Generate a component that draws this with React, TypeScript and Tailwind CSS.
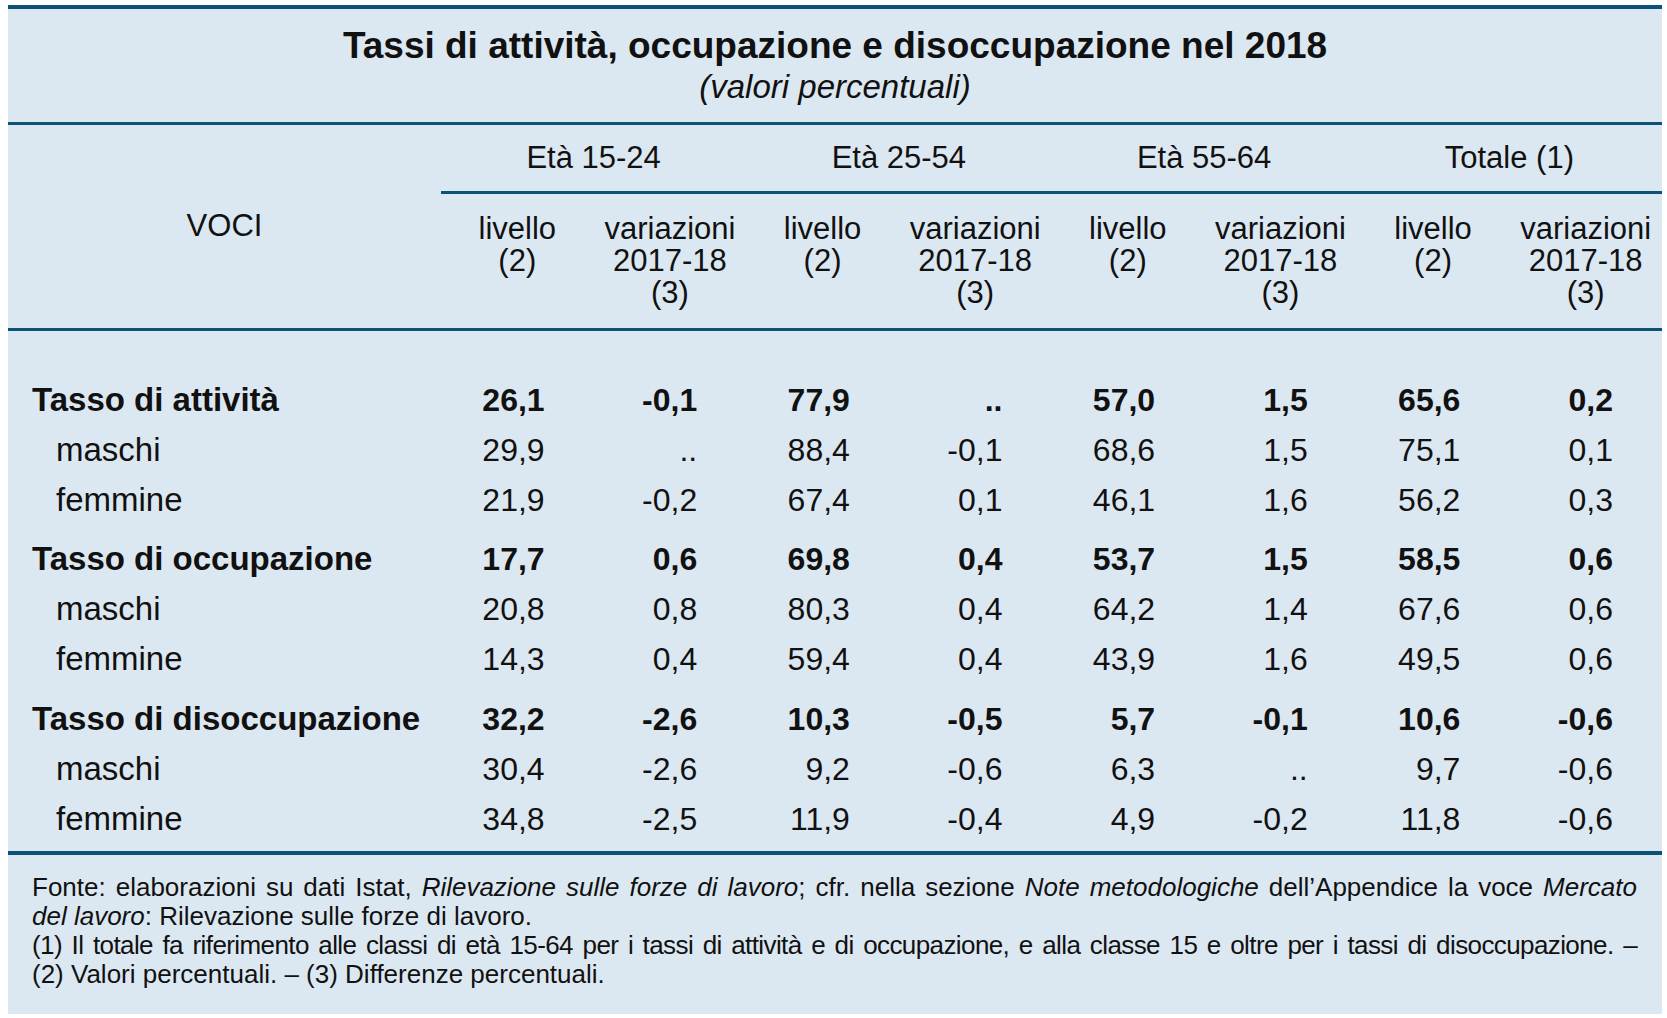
import React from "react";

const SANS = { fontFamily: '"Liberation Sans", Arial, sans-serif' };

const GROUPS = ["Età 15-24", "Età 25-54", "Età 55-64", "Totale (1)"];

type Row = { label: string; bold?: boolean; values: string[] };

const SECTIONS: Row[][] = [
  [
    { label: "Tasso di attività", bold: true, values: ["26,1", "-0,1", "77,9", "..", "57,0", "1,5", "65,6", "0,2"] },
    { label: "maschi", values: ["29,9", "..", "88,4", "-0,1", "68,6", "1,5", "75,1", "0,1"] },
    { label: "femmine", values: ["21,9", "-0,2", "67,4", "0,1", "46,1", "1,6", "56,2", "0,3"] },
  ],
  [
    { label: "Tasso di occupazione", bold: true, values: ["17,7", "0,6", "69,8", "0,4", "53,7", "1,5", "58,5", "0,6"] },
    { label: "maschi", values: ["20,8", "0,8", "80,3", "0,4", "64,2", "1,4", "67,6", "0,6"] },
    { label: "femmine", values: ["14,3", "0,4", "59,4", "0,4", "43,9", "1,6", "49,5", "0,6"] },
  ],
  [
    { label: "Tasso di disoccupazione", bold: true, values: ["32,2", "-2,6", "10,3", "-0,5", "5,7", "-0,1", "10,6", "-0,6"] },
    { label: "maschi", values: ["30,4", "-2,6", "9,2", "-0,6", "6,3", "..", "9,7", "-0,6"] },
    { label: "femmine", values: ["34,8", "-2,5", "11,9", "-0,4", "4,9", "-0,2", "11,8", "-0,6"] },
  ],
];

const GRID = "grid grid-cols-[433px_repeat(8,minmax(0,1fr))]";

function DataRow({ row }: { row: Row }) {
  return (
    <div className={`${GRID} h-[50px] items-center text-[32px] ${row.bold ? "font-bold" : ""}`}>
      <div className={`text-[33px] ${row.bold ? "pl-[24px]" : "pl-[48px]"}`}>{row.label}</div>
      {row.values.map((v, i) => (
        <div key={i} className="text-right pr-[49px]">{v}</div>
      ))}
    </div>
  );
}

export default function App() {
  return (
    <div className="w-[1667px] h-[1018px] bg-white pt-[5px] pl-[8px] text-[#111]" style={SANS}>
      <div className="w-[1654px] bg-[#dce8f1] border-t-4 border-[#0b5276]">
        {/* title */}
        <div className="h-[113px] flex flex-col items-center pt-[16px]">
          <div className="text-[37px] font-bold leading-[42px]">
            Tassi di attività, occupazione e disoccupazione nel 2018
          </div>
          <div className="text-[33px] italic leading-[38px] mt-[1px]">(valori percentuali)</div>
        </div>
        <div className="h-[3px] bg-[#0b5276]" />

        {/* column headings */}
        <div className={`${GRID} text-[31px] leading-[32px]`}>
          <div className="row-span-3 flex items-center justify-center pb-[2px]">VOCI</div>
          {GROUPS.map((g) => (
            <div key={g} className="col-span-2 h-[66px] flex items-center justify-center">
              {g}
            </div>
          ))}
          <div className="col-span-8 h-[3px] bg-[#0b5276]" />
          {GROUPS.map((g) => (
            <React.Fragment key={g}>
              <div className="text-center pt-[19px] pb-[19px]">
                livello
                <br />
                (2)
              </div>
              <div className="text-center pt-[19px] pb-[19px]">
                variazioni
                <br />
                2017-18
                <br />
                (3)
              </div>
            </React.Fragment>
          ))}
        </div>
        <div className="h-[3px] bg-[#0b5276]" />

        {/* body */}
        <div className="pt-[44px] pb-[7px]">
          {SECTIONS.map((sec, si) => (
            <div key={si} className={si === 1 ? "mt-[9px]" : si === 2 ? "mt-[10px]" : ""}>
              {sec.map((r, ri) => (
                <DataRow key={ri} row={r} />
              ))}
            </div>
          ))}
        </div>
        <div className="h-[4px] bg-[#0b5276]" />

        {/* notes */}
        <div className="pl-[24px] pr-[25px] pt-[18px] pb-[25px] text-[26px] leading-[29px]">
          <div className="text-justify [text-align-last:justify]">
            Fonte: elaborazioni su dati Istat, <i>Rilevazione sulle forze di lavoro</i>; cfr. nella sezione{" "}
            <i>Note metodologiche</i> dell’Appendice la voce <i>Mercato</i>
          </div>
          <div>
            <i>del lavoro</i>: Rilevazione sulle forze di lavoro.
          </div>
          <div className="text-justify [text-align-last:justify] tracking-[-0.6px]">
            (1) Il totale fa riferimento alle classi di età 15-64 per i tassi di attività e di occupazione, e alla classe 15 e
            oltre per i tassi di disoccupazione. –
          </div>
          <div>(2) Valori percentuali. – (3) Differenze percentuali.</div>
        </div>
      </div>
    </div>
  );
}
